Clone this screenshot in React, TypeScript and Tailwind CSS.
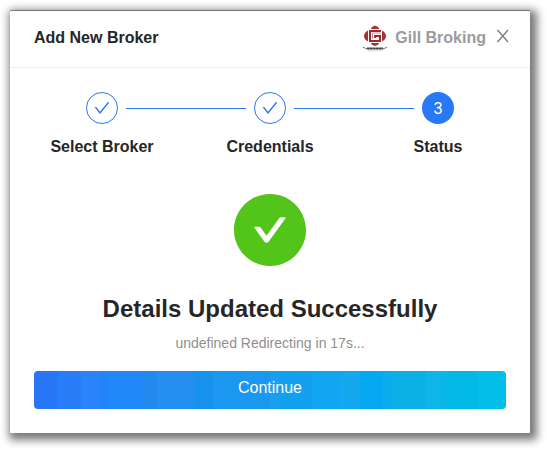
import { AiFillCheckCircle, AiOutlineCheck } from "react-icons/ai";

const steps = [
  { title: "Select Broker", done: true },
  { title: "Credentials", done: true },
  { title: "Status", done: false },
];

function BrokerLogo() {
  return (
    <svg viewBox="0 0 24 27" className="h-[27px] w-6" aria-hidden="true">
      <g fill="#a53437">
        <path d="M7.5 4 Q9 1.4 12 0.5 Q15 1.4 16.5 4 Z" />
        <path d="M5 5.5 V16.5 Q1.6 15 0.8 11 Q1.6 7 5 5.5 Z" />
        <path d="M19 5.5 V16.5 Q22.4 15 23.2 11 Q22.4 7 19 5.5 Z" />
        <path d="M7.5 18 H16.5 Q15 20.4 12 21 Q9 20.4 7.5 18 Z" />
      </g>
      <path d="M18 6 H7 V16 H17 V11 H12 V13" fill="none" stroke="#9c2c30" strokeWidth="2" />
      <path d="M18 8 H9.5 V14" fill="none" stroke="#c98f90" strokeWidth="1" />
      <path d="M0 22.2 L4 24 M24 22.2 L20 24" stroke="#666" strokeWidth="0.9" />
      <path d="M4 23.6 H20" stroke="#4b4143" strokeWidth="2" strokeDasharray="2.8 0.2" />
      <path d="M5 25.8 H19" stroke="#bdbdbd" strokeWidth="0.8" strokeDasharray="1.6 0.6" />
    </svg>
  );
}

function StepItem({ index, title, done }: { index: number; title: string; done: boolean }) {
  const line = "h-px flex-1 bg-[#2878f8]";
  return (
    <li className="flex flex-col items-center gap-[11px]">
      <div className="flex w-full items-center gap-2">
        <span className={index > 0 ? line : "flex-1"} />
        {done ? (
          <span className="flex size-8 items-center justify-center rounded-full border border-[#2878f8] text-[#2878f8]">
            <AiOutlineCheck viewBox="64 64 896 896" className="size-4" />
          </span>
        ) : (
          <span className="flex size-8 items-center justify-center rounded-full bg-[#2878f8] pt-0.5 text-base text-white">
            {index + 1}
          </span>
        )}
        <span className={index < steps.length - 1 ? line : "flex-1"} />
      </div>
      <span className="text-base font-bold">{title}</span>
    </li>
  );
}

export default function App() {
  return (
    <main className="bg-white pt-[11px] pr-[17px] pb-[18px] pl-2.5 font-['Liberation_Sans',Arial,sans-serif] text-[#262626]">
      <section
        role="dialog"
        aria-labelledby="dialog-title"
        className="rounded-[1px] bg-white shadow-[0_-1px_0_0_rgba(0,0,0,0.35),3px_3px_8px_4px_rgba(0,0,0,0.53)]"
      >
        <header className="flex h-[57px] items-center justify-between border-b border-[#ececec] pr-5 pb-0.5 pl-6">
          <h1 id="dialog-title" className="text-base font-bold">
            Add New Broker
          </h1>
          <div className="flex items-center gap-2">
            <BrokerLogo />
            <span className="text-base font-bold text-[#9b9b9b]">Gill Broking</span>
            <button type="button" aria-label="Close" className="pb-1 text-[#7c7c7c]">
              <svg viewBox="0 0 16 16" className="size-4" fill="none" stroke="currentColor" strokeWidth="1.3">
                <path d="M3.5 2 L14 14 M14 2 L3.5 14" />
              </svg>
            </button>
          </div>
        </header>

        <div className="px-6 pt-6 pb-6">
          <ol className="-mx-4 grid grid-cols-3">
            {steps.map((step, i) => (
              <StepItem key={step.title} index={i} title={step.title} done={step.done} />
            ))}
          </ol>

          <div className="flex flex-col items-center pt-[35px] text-center">
            <AiFillCheckCircle viewBox="64 64 896 896" className="size-[72px] text-[#52c41a]" />
            <h2 className="mt-[27px] text-2xl font-bold">Details Updated Successfully</h2>
            <p className="mt-2 text-sm text-[#8f8f8f]">undefined Redirecting in 17s...</p>
          </div>

          <button
            type="button"
            className="mt-[18px] block h-[38px] w-full rounded bg-[linear-gradient(90deg,#2876f7_0_5%,#2a7df8_5%_10%,#2a83fb_10%_14%,#2184f8_14%_16%,#2188fa_16%_23%,#218aec_23%_26%,#248ff0_26%_34%,#1892ef_34%_38%,#1c97f0_38%_50%,#1c9eef_50%_52%,#12a0ef_52%_59%,#12a5f1_59%_65%,#14a9ee_65%_69%,#05a9f1_69%_74%,#0cadef_74%_76%,#0bb0e7_76%_83%,#0db5e9_83%_87%,#02b9e8_87%_94%,#02bfe9_94%)] pb-1 text-base text-white"
          >
            Continue
          </button>
        </div>
      </section>
    </main>
  );
}
